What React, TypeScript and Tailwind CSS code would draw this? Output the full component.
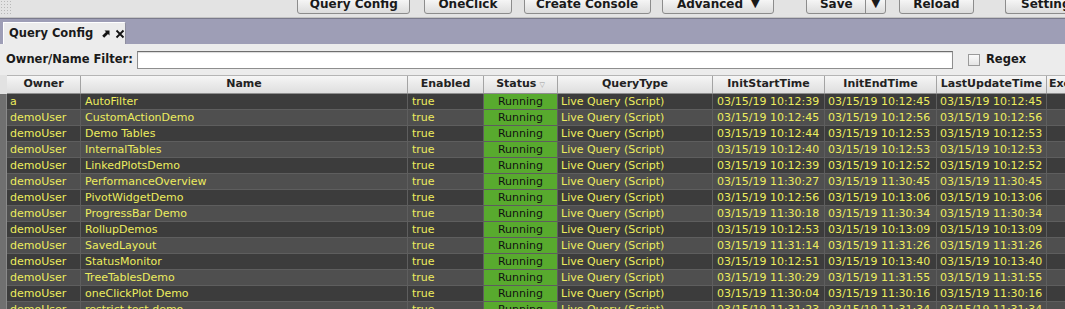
import React from 'react';

interface QueryRow {
  owner: string;
  name: string;
  start: string;
  end: string;
  update: string;
}

const rows: QueryRow[] = [
  { owner: 'a', name: 'AutoFilter', start: '10:12:39', end: '10:12:45', update: '10:12:45' },
  { owner: 'demoUser', name: 'CustomActionDemo', start: '10:12:45', end: '10:12:56', update: '10:12:56' },
  { owner: 'demoUser', name: 'Demo Tables', start: '10:12:44', end: '10:12:53', update: '10:12:53' },
  { owner: 'demoUser', name: 'InternalTables', start: '10:12:40', end: '10:12:53', update: '10:12:53' },
  { owner: 'demoUser', name: 'LinkedPlotsDemo', start: '10:12:39', end: '10:12:52', update: '10:12:52' },
  { owner: 'demoUser', name: 'PerformanceOverview', start: '11:30:27', end: '11:30:45', update: '11:30:45' },
  { owner: 'demoUser', name: 'PivotWidgetDemo', start: '10:12:56', end: '10:13:06', update: '10:13:06' },
  { owner: 'demoUser', name: 'ProgressBar Demo', start: '11:30:18', end: '11:30:34', update: '11:30:34' },
  { owner: 'demoUser', name: 'RollupDemos', start: '10:12:53', end: '10:13:09', update: '10:13:09' },
  { owner: 'demoUser', name: 'SavedLayout', start: '11:31:14', end: '11:31:26', update: '11:31:26' },
  { owner: 'demoUser', name: 'StatusMonitor', start: '10:12:51', end: '10:13:40', update: '10:13:40' },
  { owner: 'demoUser', name: 'TreeTablesDemo', start: '11:30:29', end: '11:31:55', update: '11:31:55' },
  { owner: 'demoUser', name: 'oneClickPlot Demo', start: '11:30:04', end: '11:30:16', update: '11:30:16' },
  { owner: 'demoUser', name: 'restrict test demo', start: '11:31:23', end: '11:31:34', update: '11:31:34' },
];

const ToolButton: React.FC<{ label: string; width: string; arrow?: boolean }> = ({ label, width, arrow }) => (
  <div
    className={`${width} h-[20px] -mt-[6px] flex items-center justify-center gap-[8px] border border-[#8c8c8c] rounded-b-[3px] bg-gradient-to-b from-[#ffffff] to-[#dcdcdc] text-[12px] font-bold text-[#1a1a1a] shrink-0`}
  >
    <span>{label}</span>
    {arrow && <span className="text-[11px]">▼</span>}
  </div>
);

const HeaderCell: React.FC<{ w: string; children: React.ReactNode }> = ({ w, children }) => (
  <div className={`${w} shrink-0 h-full flex items-center justify-center border-r border-[#a3a3a3] text-[11px] font-bold text-[#222]`}>
    {children}
  </div>
);

const Cell: React.FC<{ w: string; children?: React.ReactNode; className?: string }> = ({ w, children, className }) => (
  <div className={`${w} shrink-0 h-full flex items-center px-[3px] pt-[1px] border-r border-b border-[#5e5e5e] whitespace-nowrap overflow-hidden ${className || ''}`}>
    {children}
  </div>
);

const App: React.FC = () => {
  return (
    <div className="w-[1065px] h-[309px] overflow-hidden bg-[#e6e6e6] flex flex-col" style={{ fontFamily: '"DejaVu Sans", "Liberation Sans", sans-serif' }}>
      {/* toolbar */}
      <div className="h-[18px] shrink-0 flex bg-[#e3e3e3] border-b border-[#c4c4c4]">
        <div className="w-[12px] h-[15px] bg-[radial-gradient(#b8b8b8_0.6px,transparent_0.8px)] bg-[length:3px_3px]" />
        <div className="w-[294px]" />
        <ToolButton label="Query Config" width="w-[113px]" />
        <div className="w-[14px]" />
        <ToolButton label="OneClick" width="w-[88px]" />
        <div className="w-[12px]" />
        <ToolButton label="Create Console" width="w-[127px]" />
        <div className="w-[12px]" />
        <ToolButton label="Advanced" width="w-[112px]" arrow />
        <div className="w-[33px]" />
        <div className="w-[80px] h-[20px] -mt-[6px] flex border border-[#8c8c8c] rounded-b-[3px] bg-gradient-to-b from-[#ffffff] to-[#dcdcdc] text-[12px] font-bold text-[#1a1a1a] shrink-0">
          <div className="flex-1 flex items-center justify-center border-r border-[#8c8c8c]">Save</div>
          <div className="w-[19px] flex items-center justify-center text-[11px]">▼</div>
        </div>
        <div className="w-[13px]" />
        <ToolButton label="Reload" width="w-[75px]" />
        <div className="w-[32px]" />
        <div className="w-[60px] h-[20px] -mt-[6px] flex items-center pl-[15px] border border-[#8c8c8c] border-r-0 rounded-bl-[3px] bg-gradient-to-b from-[#ffffff] to-[#dcdcdc] text-[12px] font-bold text-[#1a1a1a] shrink-0 whitespace-nowrap overflow-hidden">
          Settings
        </div>
      </div>

      {/* tab strip */}
      <div className="h-[26px] shrink-0 flex items-end bg-[#9e9eb6] border-t border-[#7a7a8c] pl-[3px]">
        <div className="w-[123px] h-[22px] flex items-center pl-[5px] bg-[#ececec] border-t border-l border-r border-[#ffffff] border-r-[#8e8e9e] rounded-tr-[2px]">
          <span className="text-[11.5px] font-bold text-[#1a1a1a] whitespace-nowrap">Query Config</span>
          <svg width="8" height="8" viewBox="0 0 8 8" className="ml-[9px] shrink-0">
            <path d="M2.5 0.5 L7.5 0.5 L7.5 5.5 L6 4 L2.2 7.8 L0.2 5.8 L4 2 Z" fill="#111" />
          </svg>
          <svg width="10" height="10" viewBox="0 0 10 10" className="ml-[5px] shrink-0">
            <path d="M1.5 1.5 L8.5 8.5 M8.5 1.5 L1.5 8.5" stroke="#111" strokeWidth="1.8" />
          </svg>
        </div>
      </div>

      {/* filter row */}
      <div className="h-[31px] shrink-0 flex items-center pl-[6px] bg-[#ececec]">
        <span className="w-[131px] text-[11.5px] font-bold text-[#1a1a1a]">Owner/Name Filter:</span>
        <div className="w-[816px] h-[18px] bg-white border border-[#8e8e8e] border-t-[#6e6e6e] shadow-[inset_0_1px_1px_rgba(0,0,0,0.15)]" />
        <div className="w-[15px]" />
        <div className="w-[12px] h-[12px] bg-gradient-to-b from-[#fafafa] to-[#e4e4e4] border border-[#9a9a9a]" />
        <span className="ml-[6px] text-[11.5px] font-bold text-[#1a1a1a]">Regex</span>
      </div>

      {/* table */}
      <div className="flex-1 flex overflow-hidden bg-[#ececec]">
        <div className="w-[7px] shrink-0 flex flex-col">
          <div className="h-[19px] bg-[#e2e2e2]" />
          <div className="flex-1 bg-[#707070] border-r border-[#8a8a8a]" />
        </div>
        <div className="flex-1 flex flex-col overflow-hidden">
          <div className="h-[19px] shrink-0 flex bg-gradient-to-b from-[#f6f6f6] to-[#dedede] border-t border-[#b5b5b5] border-b border-b-[#8e8e8e]">
            <HeaderCell w="w-[74px]">Owner</HeaderCell>
            <HeaderCell w="w-[327px]">Name</HeaderCell>
            <HeaderCell w="w-[76px]">Enabled</HeaderCell>
            <HeaderCell w="w-[74px]">
              <span>Status</span>
              <span className="ml-[3px] text-[7px] text-[#9a9a9a] mt-[2px]">▽</span>
            </HeaderCell>
            <HeaderCell w="w-[155px]">QueryType</HeaderCell>
            <HeaderCell w="w-[112px]">InitStartTime</HeaderCell>
            <HeaderCell w="w-[112px]">InitEndTime</HeaderCell>
            <HeaderCell w="w-[110px]">LastUpdateTime</HeaderCell>
            <div className="flex-1 h-full flex items-center pl-[2px] text-[11px] font-bold text-[#222] overflow-hidden whitespace-nowrap">ExecutionTime</div>
          </div>
          {rows.map((r, i) => (
            <div
              key={r.name}
              className={`h-[16px] shrink-0 flex text-[11px] text-[#ecec5e] ${i % 2 === 0 ? 'bg-[#3c3c3c]' : 'bg-[#4f4f4f]'}`}
            >
              <Cell w="w-[74px]">{r.owner}</Cell>
              <Cell w="w-[327px]" className="pl-[4px]">{r.name}</Cell>
              <Cell w="w-[76px]" className="pl-[4px]">true</Cell>
              <Cell w="w-[74px]" className="justify-center bg-[#58aa2e] text-[#111]">Running</Cell>
              <Cell w="w-[155px]">Live Query (Script)</Cell>
              <Cell w="w-[112px]" className="pl-[4px]">03/15/19 {r.start}</Cell>
              <Cell w="w-[112px]">03/15/19 {r.end}</Cell>
              <Cell w="w-[110px]">03/15/19 {r.update}</Cell>
              <div className="flex-1 h-full border-b border-[#5e5e5e]" />
            </div>
          ))}
        </div>
      </div>
    </div>
  );
};

export default App;
